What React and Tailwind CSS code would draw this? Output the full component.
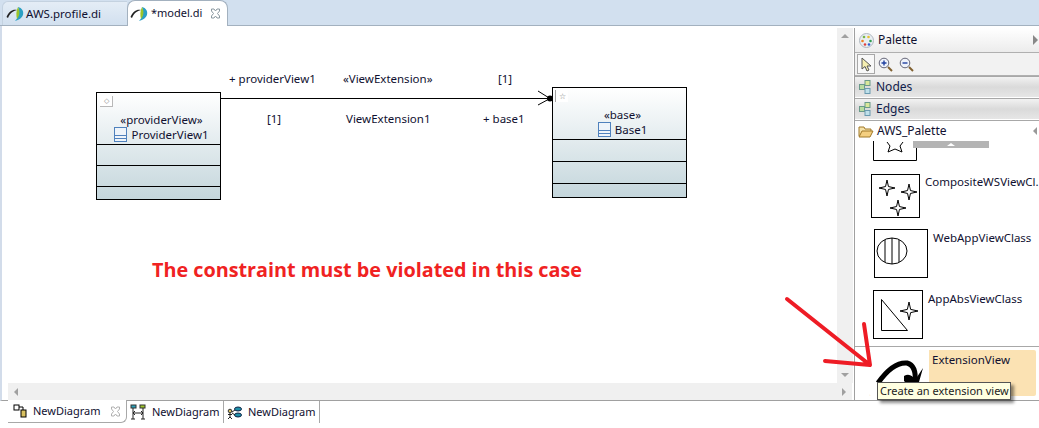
import React from "react";

const PapyrusIcon = () => (
  <svg width="18" height="16" viewBox="0 0 18 16" className="shrink-0">
    <path d="M0.5 11 C3 5 7 3 11 4 C7 5 4 7 2 12 Z" fill="#222" />
    <path d="M12 1 C16 2 18 5 17 9 C16 12 13 14 9 15 C12 12 14 7 12 1 Z" fill="#2a9fc4" />
    <path d="M12 1 C14 5 14 9 11 13 C10 9 10 5 12 1 Z" fill="#9cc42a" />
  </svg>
);

const CloseIcon = ({ color = "#8a98a0" }) => (
  <svg width="11" height="11" viewBox="0 0 11 11" className="shrink-0">
    <path d="M1.5 1 L4 1 L5.5 3 L7 1 L9.5 1 L9.5 3 L7.5 5.5 L9.5 8 L9.5 10 L7 10 L5.5 8 L4 10 L1.5 10 L1.5 8 L3.5 5.5 L1.5 3 Z" fill="white" stroke={color} />
  </svg>
);

const ClassGlyph = () => (
  <svg width="13" height="15" viewBox="0 0 13 15" className="shrink-0">
    <rect x="0.5" y="0.5" width="12" height="14" fill="#eef4fa" stroke="#4f81bd" />
    <path d="M1 8.5 H12 M1 11.5 H12" stroke="#4f81bd" />
  </svg>
);

const Star4 = ({ x, y, r = 10 }) => {
  const i = r * 0.18;
  return (
    <path
      d={`M${x} ${y - r} L${x + i} ${y - i} L${x + r} ${y} L${x + i} ${y + i} L${x} ${y + r} L${x - i} ${y + i} L${x - r} ${y} L${x - i} ${y - i} Z`}
      fill="white"
      stroke="black"
    />
  );
};

const UmlClass = ({ stereotype, name, corner, heights, className }) => (
  <div className={`absolute border border-black bg-gradient-to-b from-white to-[#c4d6dc] flex flex-col ${className}`}>
    <div className="relative flex-none flex flex-col items-center justify-end pl-[6px] pb-0.5 h-[51px] leading-[15px]">
      {corner}
      <span>«{stereotype}»</span>
      <span className="flex items-center gap-1">
        <ClassGlyph />
        {name}
      </span>
    </div>
    {heights.map((h, i) => (
      <div key={i} className={`border-t border-black ${h}`} />
    ))}
  </div>
);

const Drawer = ({ label }) => (
  <div className="flex-none flex items-center gap-[5px] h-[22px] pl-[4px] bg-gradient-to-b from-[#f2f2f2] via-[#dadada] to-[#e6e6e6] border-t border-[#a8a8a8] border-b border-b-white text-[12px] text-[#10204a]">
    <svg width="12" height="14" viewBox="0 0 12 14">
      <rect x="6" y="0.5" width="5" height="5" fill="#d8e89a" stroke="#6a9a8a" />
      <rect x="0.5" y="4.5" width="5" height="5" fill="#b8dca0" stroke="#6a9a8a" />
      <rect x="6" y="8.5" width="5" height="5" fill="#bfe0ea" stroke="#6a9ab0" />
    </svg>
    {label}
  </div>
);

export default function App() {
  return (
    <div className="relative w-[1039px] h-[428px] overflow-hidden bg-white flex flex-col text-[11.5px] text-[#101030] font-['Noto_Sans',sans-serif]">
      {/* editor tabs */}
      <div className="flex-none h-[26px] flex items-end pl-[2px] bg-[#d2e0ef] border-b border-[#a3b1bf]">
        <div className="w-[125px] h-[24px] flex items-center gap-0.5 pl-[3px] border-l border-t border-[#c4d2e0] bg-gradient-to-b from-[#e4edf6] to-[#d2e0ef] rounded-tl-md">
          <PapyrusIcon />
          <span>AWS.profile.di</span>
        </div>
        <div className="w-[101px] h-[26px] -mb-px flex items-center gap-[3px] pl-[2px] bg-white border border-b-0 border-[#a3b1bf] rounded-t-lg">
          <PapyrusIcon />
          <span className="text-[11px]">*model.di</span>
          <span className="ml-auto mr-[6px]"><CloseIcon /></span>
        </div>
      </div>

      <div className="flex-1 min-h-0 flex border-b border-[#a0a0a0] border-l-2 border-l-[#d2dcea]">
        {/* canvas + scrollbars */}
        <div className="flex-1 min-w-0 flex flex-col">
          <div className="flex-1 min-h-0 flex">
            <div className="relative flex-1 min-w-0">
              <UmlClass
                stereotype="providerView"
                name="ProviderView1"
                className="left-[94px] top-[66px] w-[125px] h-[108px]"
                heights={["h-[21px]", "h-[21px]", "flex-1"]}
                corner={
                  <span className="absolute left-[3px] top-[3px] w-[13px] h-[11px] bg-white border-r border-b border-[#b8b8b8] text-[7px] leading-[10px] text-center text-[#888]">◇</span>
                }
              />
              <UmlClass
                stereotype="base"
                name="Base1"
                className="left-[550px] top-[61px] w-[135px] h-[111px]"
                heights={["h-[22px]", "h-[22px]", "flex-1"]}
                corner={
                  <span className="absolute left-[2px] top-[2px] w-[13px] h-[12px] bg-white border-l border-[#a0a0a0] text-[8px] leading-[11px] text-center text-[#777]">☆</span>
                }
              />
              <svg className="absolute left-[218px] top-[60px]" width="334" height="24" viewBox="0 0 334 24">
                <path d="M1 12.5 H330" stroke="black" />
                <path d="M318 5 L330 12.5 L318 19" stroke="black" fill="none" />
                <circle cx="330" cy="12.5" r="3" fill="black" />
              </svg>
              <span className="absolute left-[227px] top-[44px]">+ providerView1</span>
              <span className="absolute left-[341px] top-[44px]">«ViewExtension»</span>
              <span className="absolute left-[496px] top-[44px]">[1]</span>
              <span className="absolute left-[265px] top-[84px]">[1]</span>
              <span className="absolute left-[344px] top-[84px]">ViewExtension1</span>
              <span className="absolute left-[481px] top-[84px]">+ base1</span>
              <span className="absolute left-[150px] top-[230px] text-[19.8px] leading-[27px] font-bold text-[#f02222] font-['Open_Sans',sans-serif] whitespace-nowrap">
                The constraint must be violated in this case
              </span>
            </div>
            {/* vertical scrollbar */}
            <div className="flex-none w-[16px] mt-[2px] ml-[1px] mr-[1px] bg-[#f0f0f0] flex flex-col justify-between items-center py-[6px]">
              <span className="w-0 h-0 border-x-[4px] border-x-transparent border-b-[4px] border-b-[#a0a0a0]" />
              <span className="w-0 h-0 border-x-[4px] border-x-transparent border-t-[4px] border-t-[#a0a0a0]" />
            </div>
          </div>
          <div className="flex-none h-[17px] ml-[6px] mr-[2px] bg-[#f0f0f0] flex justify-between items-center px-[6px]">
            <span className="w-0 h-0 border-y-[4px] border-y-transparent border-r-[4px] border-r-[#a0a0a0]" />
            <span className="w-0 h-0 border-y-[4px] border-y-transparent border-l-[4px] border-l-[#a0a0a0]" />
          </div>
        </div>

        {/* palette */}
        <div className="relative flex-none w-[185px] mt-[2px] border-l border-[#a0a0a0] flex flex-col">
          <div className="flex-none h-[24px] flex items-center gap-1 pl-[4px] bg-gradient-to-b from-white to-[#ececec] text-[12px]">
            <svg width="15" height="15" viewBox="0 0 15 15">
              <circle cx="7.5" cy="7.5" r="7" fill="#e8eef2" stroke="#b0b8c0" />
              <circle cx="5" cy="4" r="1.3" fill="#7ab648" />
              <circle cx="9.5" cy="4" r="1.3" fill="#e8c030" />
              <circle cx="3.5" cy="8" r="1.3" fill="#f08020" />
              <circle cx="11.5" cy="8" r="1.3" fill="#30a050" />
              <circle cx="6" cy="11.5" r="1.3" fill="#e04040" />
              <circle cx="10" cy="11.5" r="1.3" fill="#3060d0" />
            </svg>
            <span className="flex-1">Palette</span>
            <span className="w-0 h-0 mr-[1px] border-y-[5px] border-y-transparent border-l-[5px] border-l-[#888]" />
          </div>
          <div className="flex-none h-[24px] flex items-center gap-[3px] pl-[2px] bg-[#f2f2f2] border-t border-b border-[#b0b0b0]">
            <span className="w-[18px] h-[20px] border border-[#a8a8a8] bg-[#f8f8f8] flex items-center justify-center">
              <svg width="12" height="15" viewBox="0 0 12 15">
                <path d="M2 1 L2 12 L5 9.5 L7 14 L9 13 L7 9 L11 9 Z" fill="#f6efb0" stroke="#555" />
              </svg>
            </span>
            <svg width="15" height="15" viewBox="0 0 15 15">
              <circle cx="6" cy="6" r="4.8" fill="#eef2fa" stroke="#667" />
              <path d="M3.5 6 H8.5 M6 3.5 V8.5" stroke="#2040a0" strokeWidth="1.4" />
              <path d="M10 10 L14 14" stroke="#806030" strokeWidth="2" />
            </svg>
            <svg width="15" height="15" viewBox="0 0 15 15" className="ml-[3px]">
              <circle cx="6" cy="6" r="4.8" fill="#eef2fa" stroke="#667" />
              <path d="M3.5 6 H8.5" stroke="#2040a0" strokeWidth="1.4" />
              <path d="M10 10 L14 14" stroke="#806030" strokeWidth="2" />
            </svg>
          </div>
          <Drawer label="Nodes" />
          <Drawer label="Edges" />
          <div className="flex-none h-[21px] flex items-center gap-[3px] pl-[3px] bg-white border-t border-[#a8a8a8] text-[12px]">
            <svg width="16" height="13" viewBox="0 0 16 13">
              <path d="M1 11 V2 H6 L7 4 H13 V6" fill="#f6e2a8" stroke="#a07828" />
              <path d="M1 12 L4 6 H15 L12 12 Z" fill="#f4cf80" stroke="#a07828" />
            </svg>
            <span className="flex-1">AWS_Palette</span>
            <span className="w-0 h-0 mr-[2px] border-y-[4px] border-y-transparent border-r-[4px] border-r-[#999]" />
          </div>

          {/* palette entries */}
          <div className="relative flex-1 min-h-0 overflow-hidden flex flex-col">
            <span className="absolute left-[58px] top-0 w-[76px] h-[7px] bg-[#b4b4b4] flex justify-center pt-[2px]">
              <span className="w-0 h-0 border-x-[4px] border-x-transparent border-b-[3px] border-b-white" />
            </span>
            <svg className="flex-none ml-[18px]" width="44" height="20" viewBox="0 0 44 20">
              <path d="M0.5 0 V19.5 H43.5 V0" fill="white" stroke="black" />
              <path d="M14 1 L17 5 L15 11 L22 8 L29 11 L27 5 L30 1" fill="none" stroke="black" />
            </svg>
            <div className="flex-none flex mt-[13px] ml-[16px] h-[44px]">
              <svg width="49" height="44" viewBox="0 0 49 44">
                <rect x="0.5" y="0.5" width="48" height="43" fill="white" stroke="black" />
                <Star4 x={16} y={14} r={8} />
                <Star4 x={38} y={18} r={8} />
                <Star4 x={27} y={34} r={8} />
              </svg>
              <span className="ml-[5px] -mt-px whitespace-nowrap">CompositeWSViewCl.</span>
            </div>
            <div className="flex-none flex mt-[11px] ml-[19px] h-[49px]">
              <svg width="54" height="49" viewBox="0 0 54 49">
                <rect x="0.5" y="0.5" width="53" height="48" fill="white" stroke="black" />
                <ellipse cx="18" cy="22" rx="15" ry="13" fill="white" stroke="black" />
                <path d="M11 11 V33 M18 9 V35 M25 11 V33" stroke="black" />
              </svg>
              <span className="ml-[5px] whitespace-nowrap">WebAppViewClass</span>
            </div>
            <div className="flex-none flex mt-[12px] ml-[18px] h-[49px]">
              <svg width="50" height="49" viewBox="0 0 50 49">
                <rect x="0.5" y="0.5" width="49" height="48" fill="white" stroke="black" />
                <path d="M8.5 9.5 V40.5 H34.5 Z" fill="white" stroke="black" />
                <Star4 x={36} y={21} r={9} />
              </svg>
              <span className="ml-[5px] whitespace-nowrap">AppAbsViewClass</span>
            </div>
            <div className="flex-none mt-[7px] border-t border-[#a8a8a8]" />
            <div className="flex-none flex mt-[3px] ml-[14px] mr-[3px] h-[46px] rounded-[2px] bg-[#fbe2b3] overflow-hidden">
              <svg width="60" height="46" viewBox="0 0 60 46" className="flex-none">
                <rect width="60" height="46" fill="white" />
                <path d="M9 33 C16 23 26 12 38 13 C45 15 47 22 46 32" fill="none" stroke="black" strokeWidth="5" />
                <path d="M35 26 C40 23 44 26 46 30 L54 18 L50 32 L46 42 L35 31 Z" fill="black" />
              </svg>
              <span className="ml-[3px] mt-px whitespace-nowrap">ExtensionView</span>
            </div>
          </div>
        </div>
      </div>

      {/* bottom tabs */}
      <div className="flex-none h-[27px] flex items-start pl-[8px] pr-0 text-[11px]">
        <div className="w-[119px] h-[23px] -mt-px flex items-center gap-[5px] pl-[5px] bg-white border-r border-b border-[#a8a8a8] rounded-br-md">
          <svg width="15" height="14" viewBox="0 0 15 14">
            <rect x="1" y="1" width="5" height="5" fill="white" stroke="black" />
            <rect x="8" y="6" width="5" height="7" fill="#d8c060" stroke="black" />
            <path d="M6 3 H10 V6" stroke="black" fill="none" />
          </svg>
          <span>NewDiagram</span>
          <span className="ml-auto mr-[5px]"><CloseIcon color="#b0b0b0" /></span>
        </div>
        <div className="w-[97px] h-[22px] flex items-center gap-[6px] pl-[3px] border-r border-[#a8a8a8]">
          <svg width="16" height="16" viewBox="0 0 16 16">
            <rect x="1" y="1" width="5" height="3" fill="#2aa0b8" stroke="#333" />
            <rect x="10" y="1" width="5" height="3" fill="#9cc42a" stroke="#333" />
            <path d="M3 4 V15 M13 4 V15 M1 15 H5 M11 15 H15 M3 9 H13 M5 7 L3 9 L5 11 M11 7 L13 9 L11 11" stroke="#222" fill="none" />
          </svg>
          <span>NewDiagram</span>
        </div>
        <div className="w-[96px] h-[22px] flex items-center gap-[6px] pl-[3px] border-r border-[#a8a8a8]">
          <svg width="15" height="15" viewBox="0 0 15 15">
            <circle cx="3" cy="6" r="1.8" fill="#d8c060" stroke="#333" />
            <path d="M3 8 V12 M1 9.5 H5 M1 14 L3 12 L5 14" stroke="#222" fill="none" />
            <ellipse cx="11" cy="4" rx="3.5" ry="2" fill="#1f8fa8" stroke="#124" />
            <ellipse cx="11" cy="10" rx="3.5" ry="2" fill="#1f8fa8" stroke="#124" />
            <path d="M5 7 L8 5 M5 8 L8 10" stroke="#222" />
          </svg>
          <span>NewDiagram</span>
        </div>
      </div>

      {/* annotation arrows drawn over the screenshot */}
      <svg className="absolute left-0 top-0 pointer-events-none" width="1039" height="428" viewBox="0 0 1039 428">
        <path d="M787 299 L870 365 M864 324 L870 365 M825 361 L870 365" fill="none" stroke="#ee1c25" strokeWidth="4" strokeLinecap="round" />
      </svg>

      {/* tooltip */}
      <div className="absolute left-[877px] top-[382px] w-[134px] h-[18px] pl-[2px] bg-[#ffffe1] border border-[#555] shadow-[3px_3px_3px_rgba(0,0,0,0.45)] text-[11px] leading-[16px] whitespace-nowrap text-[#222]">
        Create an extension view
      </div>
    </div>
  );
}
